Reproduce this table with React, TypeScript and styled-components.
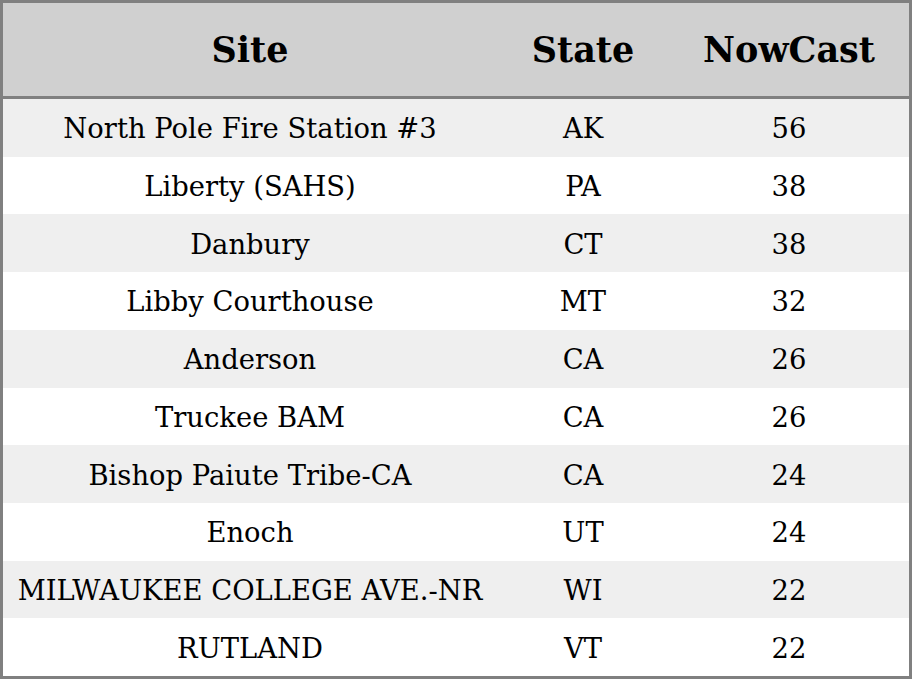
import React from 'react'
import styled, { createGlobalStyle } from 'styled-components'

const rows = [
    { site: 'North Pole Fire Station #3', state: 'AK', nowcast: 56 },
    { site: 'Liberty (SAHS)', state: 'PA', nowcast: 38 },
    { site: 'Danbury', state: 'CT', nowcast: 38 },
    { site: 'Libby Courthouse', state: 'MT', nowcast: 32 },
    { site: 'Anderson', state: 'CA', nowcast: 26 },
    { site: 'Truckee BAM', state: 'CA', nowcast: 26 },
    { site: 'Bishop Paiute Tribe-CA', state: 'CA', nowcast: 24 },
    { site: 'Enoch', state: 'UT', nowcast: 24 },
    { site: 'MILWAUKEE COLLEGE AVE.-NR', state: 'WI', nowcast: 22 },
    { site: 'RUTLAND', state: 'VT', nowcast: 22 },
]

export default function App() {
    return (
        <>
            <GlobalStyle />
            <Table>
                <HeaderRow>
                    <HeaderCell>Site</HeaderCell>
                    <HeaderCell>State</HeaderCell>
                    <HeaderCell>NowCast</HeaderCell>
                </HeaderRow>
                <Body>
                    {rows.map((row, i) => (
                        <Row key={i} $shaded={i % 2 === 0}>
                            <Cell>{row.site}</Cell>
                            <Cell>{row.state}</Cell>
                            <Cell>{row.nowcast}</Cell>
                        </Row>
                    ))}
                </Body>
            </Table>
        </>
    )
}

const GlobalStyle = createGlobalStyle`
    html, body {
        margin: 0;
        padding: 0;
        background: #ffffff;
    }
`

const Table = styled.div`
    box-sizing: border-box;
    width: 912px;
    height: 679px;
    border: 3px solid #808080;
    display: flex;
    flex-direction: column;
    font-family: "DejaVu Serif", serif;
    color: #000000;
`

const HeaderRow = styled.div`
    display: grid;
    grid-template-columns: 494px 172px 1fr;
    height: 93px;
    flex-shrink: 0;
    background: #d0d0d0;
    border-bottom: 3px solid #808080;
`

const HeaderCell = styled.div`
    display: flex;
    justify-content: center;
    align-items: center;
    font-size: 35px;
    font-weight: bold;
`

const Body = styled.div`
    flex: 1;
    display: grid;
    grid-template-rows: repeat(10, 1fr);
`

const Row = styled.div<{ $shaded: boolean }>`
    display: grid;
    grid-template-columns: 494px 172px 1fr;
    background: ${p => (p.$shaded ? '#efefef' : '#ffffff')};
`

const Cell = styled.div`
    display: flex;
    justify-content: center;
    align-items: center;
    padding-top: 2px;
    font-size: 27.4px;
    white-space: nowrap;
`
